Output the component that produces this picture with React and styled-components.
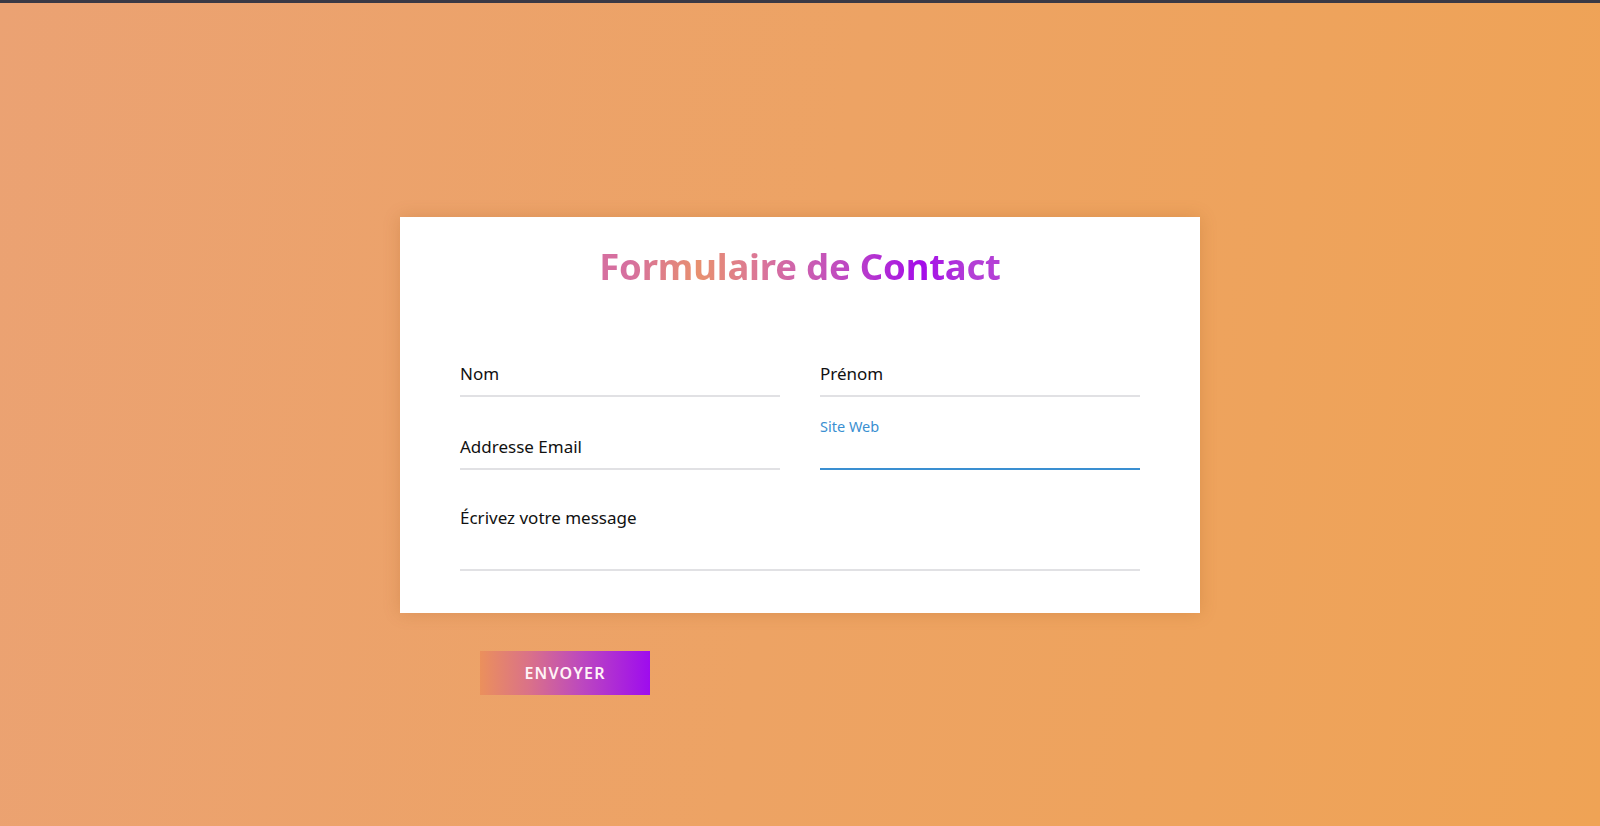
import React from "react";
import styled, { createGlobalStyle } from "styled-components";

const GlobalStyle = createGlobalStyle`
  html, body {
    margin: 0;
    padding: 0;
  }
  body {
    font-family: "Noto Sans", "Open Sans", sans-serif;
    background: #eca264;
  }
`;

const Page = styled.div`
  min-height: 826px;
  display: flex;
  flex-direction: column;
  background: linear-gradient(100deg, #eba273 0%, #eda364 50%, #efa355 100%);
`;

const TopBar = styled.div`
  height: 3px;
  background: #3a3945;
`;

const Main = styled.main`
  width: 800px;
  margin: 0 auto;
  padding-top: 214px;
`;

const Card = styled.form`
  background: #fff;
  padding: 27px 60px 42px;
  box-shadow: 0 0 16px rgba(150, 80, 20, 0.22);
`;

const Title = styled.h1`
  margin: 0 0 57px;
  text-align: center;
  font-size: 36.5px;
  line-height: 44px;
  font-weight: 700;
  letter-spacing: -0.2px;
  background: linear-gradient(
    90deg,
    #d66f9f 25%,
    #e8906f 35%,
    #d9739c 45%,
    #bd47c4 57%,
    #a40ce9 68%,
    #b43fd6 75%
  );
  -webkit-background-clip: text;
  background-clip: text;
  color: transparent;
`;

const Grid = styled.div`
  display: grid;
  grid-template-columns: 1fr 1fr;
  column-gap: 40px;
  row-gap: 21px;
`;

const Field = styled.div`
  position: relative;
  grid-column: ${p => (p.$wide ? "1 / -1" : "auto")};
  height: ${p => (p.$tall ? 78 : 50)}px;
  border-bottom: 2px solid ${p => (p.$active ? "#3a8fd1" : "#e1e1e4")};
`;

const Label = styled.label`
  position: absolute;
  left: 0;
  top: ${p => (p.$active ? 0 : p.$top ?? 19)}px;
  font-size: ${p => (p.$active ? 14.5 : 17)}px;
  line-height: ${p => (p.$active ? 17 : 20)}px;
  color: ${p => (p.$active ? "#3a8fd1" : "#111")};
  pointer-events: none;
`;

const Input = styled.input`
  width: 100%;
  height: 100%;
  box-sizing: border-box;
  border: none;
  outline: none;
  background: transparent;
  padding: 18px 0 0;
  font: inherit;
  font-size: 16px;
`;

const TextArea = styled.textarea`
  width: 100%;
  height: 100%;
  box-sizing: border-box;
  border: none;
  outline: none;
  resize: none;
  background: transparent;
  padding: 40px 0 0;
  font: inherit;
  font-size: 16px;
`;

const Send = styled.button`
  margin: 38px 0 0 80px;
  width: 170px;
  height: 44px;
  border: none;
  background: linear-gradient(90deg, #eb905c 0%, #d9708a 30%, #bc48bf 60%, #9e0cee 100%);
  color: #fff3f7;
  font-family: "Noto Sans", sans-serif;
  font-size: 16px;
  font-weight: 600;
  letter-spacing: 1.2px;
  cursor: pointer;
`;

function TextField({ label, active, wide }) {
  return (
    <Field $active={active} $wide={wide}>
      <Label $active={active}>{label}</Label>
      <Input type="text" />
    </Field>
  );
}

export default function App() {
  return (
    <Page>
      <GlobalStyle />
      <TopBar />
      <Main>
        <Card onSubmit={e => e.preventDefault()}>
          <Title>Formulaire de Contact</Title>
          <Grid>
            <TextField label="Nom" />
            <TextField label="Prénom" />
            <TextField label="Addresse Email" />
            <TextField label="Site Web" active />
            <Field $wide $tall>
              <Label $top={17}>Écrivez votre message</Label>
              <TextArea />
            </Field>
          </Grid>
        </Card>
        <Send type="button">ENVOYER</Send>
      </Main>
    </Page>
  );
}
